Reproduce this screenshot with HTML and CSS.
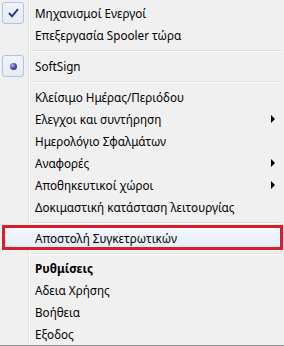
FILE: index.html
```html
<!DOCTYPE html>
<html lang="el">
<head>
  <meta charset="UTF-8" />
  <title>Menu</title>
  <link rel="stylesheet" href="styles.css">
</head>
<body>
  <div class="menu">
    <div class="item">
      <span class="mark">
        <svg width="11" height="10" viewBox="0 0 11 10"><path d="M1 5 L4 8.3 L10 1.2" fill="none" stroke="#23338a" stroke-width="1.9"/></svg>
      </span>
      <span class="label">Μηχανισμοί Ενεργοί</span>
    </div>
    <div class="item">
      <span class="mark empty"></span>
      <span class="label">Επεξεργασία Spooler τώρα</span>
    </div>
    <div class="sep"></div>
    <div class="item">
      <span class="mark"><span class="bullet"></span></span>
      <span class="label">SoftSign</span>
    </div>
    <div class="sep"></div>
    <div class="item">
      <span class="mark empty"></span>
      <span class="label">Κλείσιμο Ημέρας/Περιόδου</span>
    </div>
    <div class="item">
      <span class="mark empty"></span>
      <span class="label">Ελεγχοι και συντήρηση</span>
      <span class="arrow"></span>
    </div>
    <div class="item">
      <span class="mark empty"></span>
      <span class="label">Ημερολόγιο Σφαλμάτων</span>
    </div>
    <div class="item">
      <span class="mark empty"></span>
      <span class="label">Αναφορές</span>
      <span class="arrow"></span>
    </div>
    <div class="item">
      <span class="mark empty"></span>
      <span class="label">Αποθηκευτικοί χώροι</span>
      <span class="arrow"></span>
    </div>
    <div class="item">
      <span class="mark empty"></span>
      <span class="label">Δοκιμαστική κατάσταση λειτουργίας</span>
    </div>
    <div class="sep"></div>
    <div class="item active">
      <span class="mark empty"></span>
      <span class="label">Αποστολή Συγκετρωτικών</span>
    </div>
    <div class="sep short"></div>
    <div class="item">
      <span class="mark empty"></span>
      <span class="label bold">Ρυθμίσεις</span>
    </div>
    <div class="item">
      <span class="mark empty"></span>
      <span class="label">Αδεια Χρήσης</span>
    </div>
    <div class="item">
      <span class="mark empty"></span>
      <span class="label">Βοήθεια</span>
    </div>
    <div class="item">
      <span class="mark empty"></span>
      <span class="label">Εξοδος</span>
    </div>
  </div>
</body>
</html>
```

FILE: styles.css
```css
body {
  margin: 0;
  font-family: "Noto Sans", "DejaVu Sans", sans-serif;
  font-size: 11.7px;
  color: #000;
}

.menu {
  width: 284px;
  height: 346px;
  box-sizing: border-box;
  padding: 2px 2px 0 2px;
  border-bottom: 1px solid #8e8e8e;
  background: linear-gradient(to right,
    #f0f0f0 28px, #e2e3e3 28px, #e2e3e3 29px,
    #ffffff 29px, #ffffff 30px, #f0f0f0 30px);
}

.item {
  display: flex;
  align-items: center;
  height: 22px;
  box-sizing: border-box;
  position: relative;
}

.mark {
  width: 22px;
  height: 22px;
  box-sizing: border-box;
  display: flex;
  align-items: center;
  justify-content: center;
  border: 1px solid #b2c3da;
  border-radius: 3px;
  background: linear-gradient(#f0f3f9, #e6ebf3);
}

.mark.empty {
  border-color: transparent;
  background: none;
}

.bullet {
  width: 7px;
  height: 7px;
  border-radius: 50%;
  background: radial-gradient(circle at 35% 35%, #b4b4ec 0, #5252b0 45%, #24246e 100%);
}

.label {
  padding-left: 11px;
  white-space: nowrap;
}

.bold {
  font-weight: bold;
}

.arrow {
  margin-left: auto;
  margin-right: 7px;
  width: 0;
  height: 0;
  border-top: 4px solid transparent;
  border-bottom: 4px solid transparent;
  border-left: 4px solid #000;
}

.sep {
  height: 9px;
  margin-left: 28px;
  background: linear-gradient(to bottom,
    transparent 4px, #e0e0e0 4px, #e0e0e0 5px,
    #ffffff 5px, #ffffff 6px, transparent 6px);
}

.sep.short {
  height: 8px;
}

.item.active {
  border: 1px solid #bcd1ee;
  border-radius: 3px;
  background: linear-gradient(#f4f8fd, #e3ecf8);
}

.item.active .mark {
  margin-left: -1px;
}

.item.active::after {
  content: "";
  position: absolute;
  top: -3px;
  bottom: -2px;
  left: -1px;
  right: -2px;
  border: 3px solid #d51f2c;
}
```
